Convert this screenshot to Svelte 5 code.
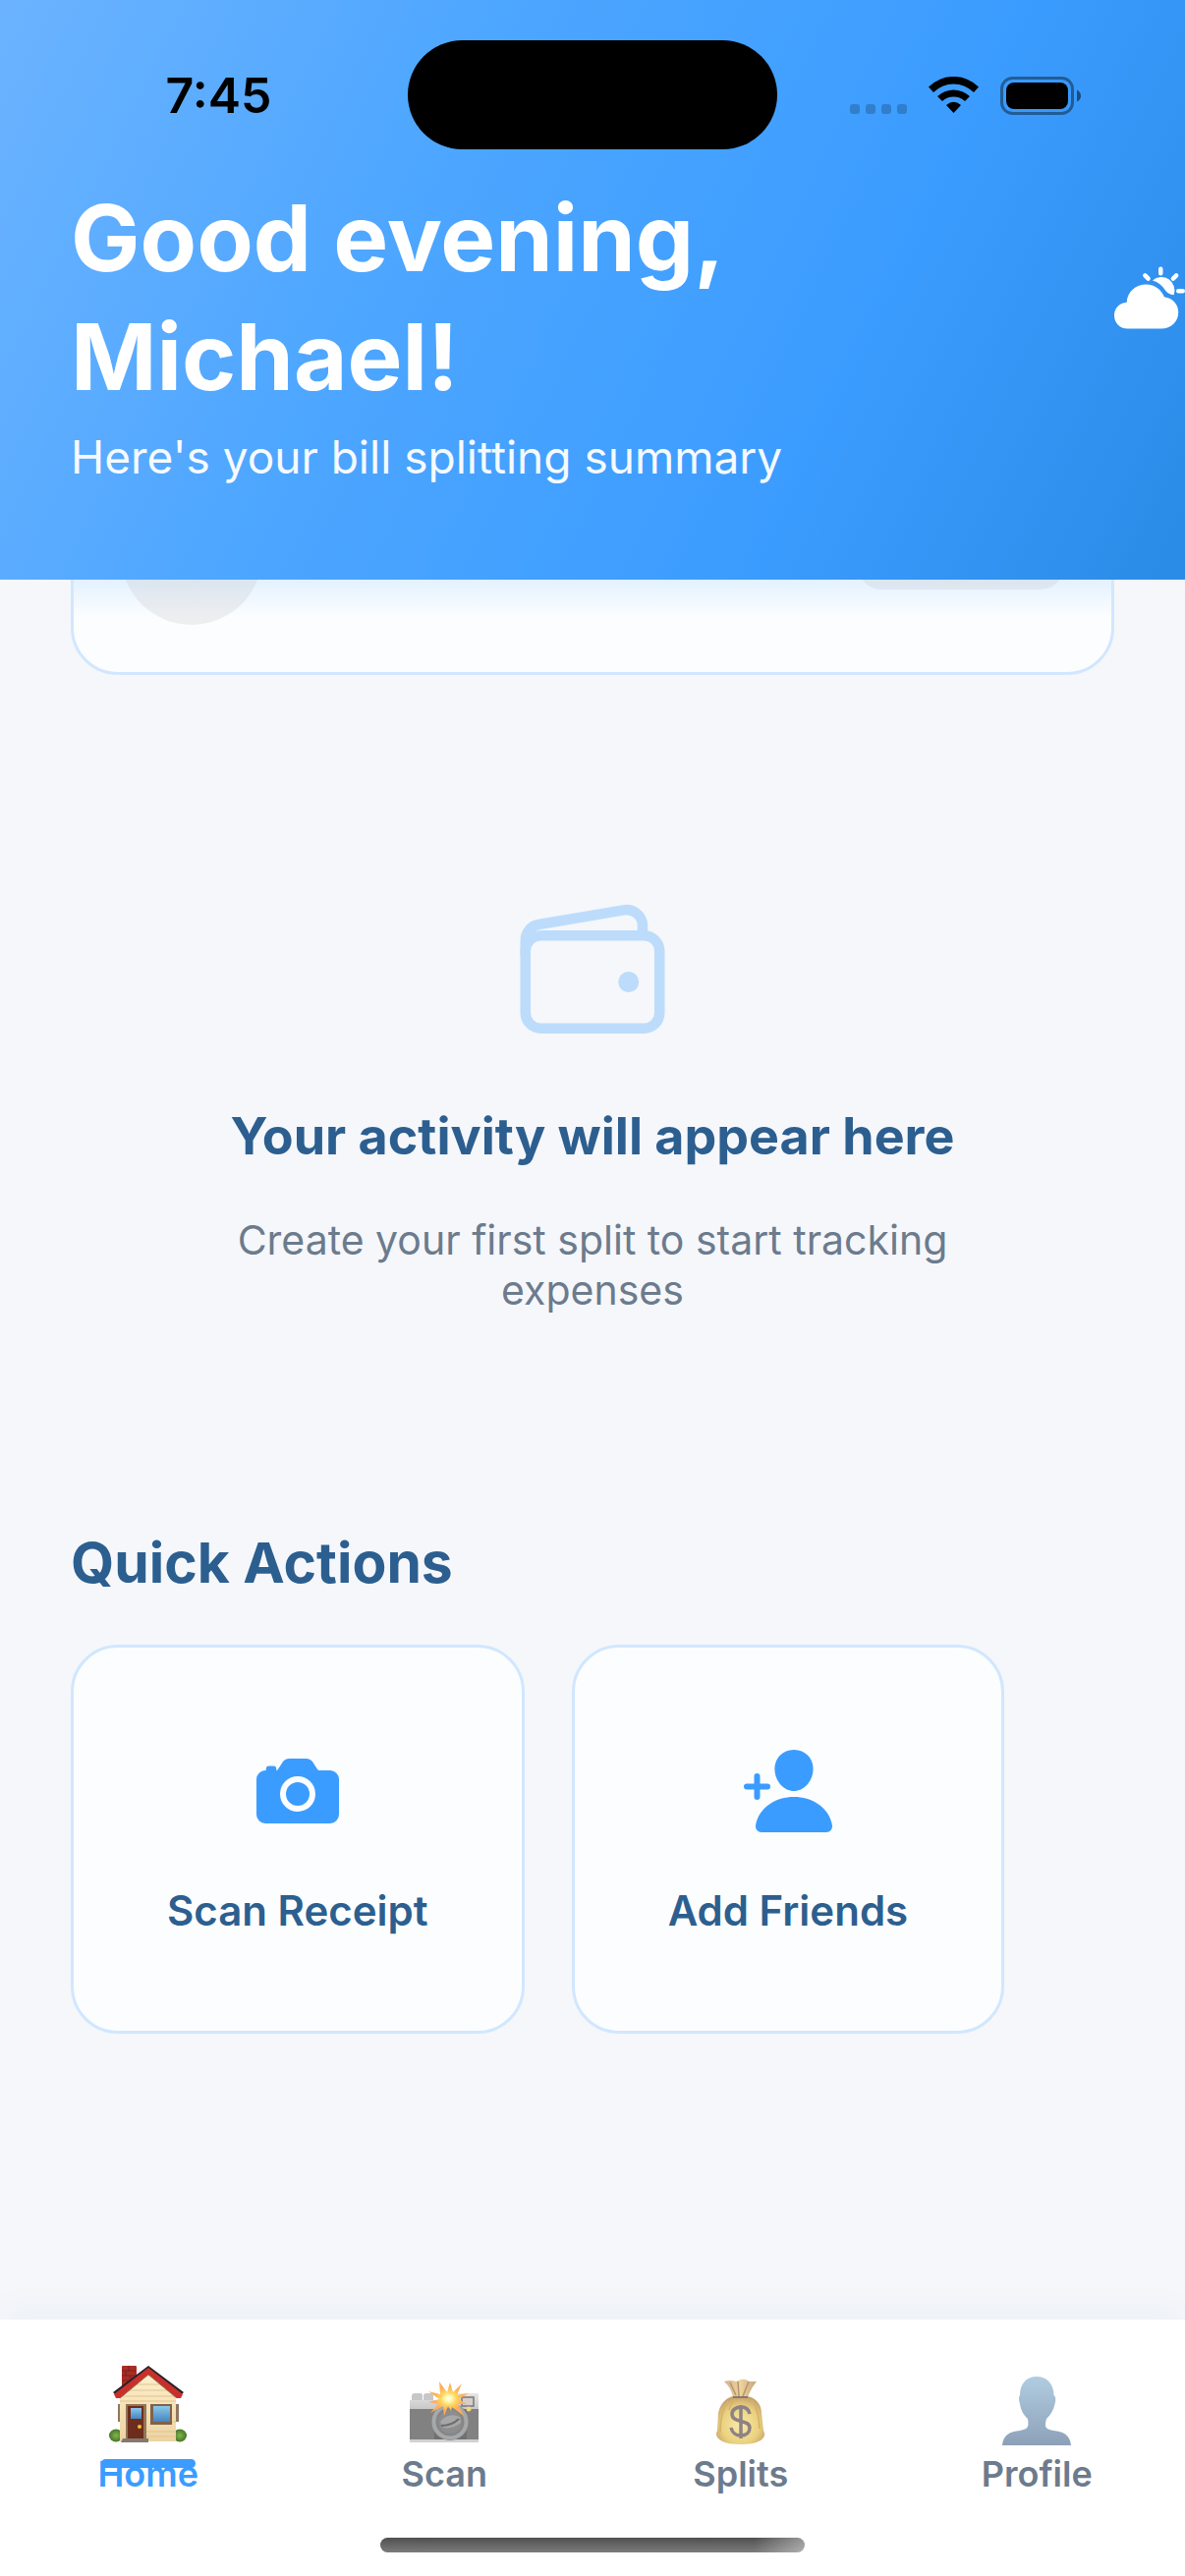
<script>
  let active = $state('home');
  const tabs = [
    { id: 'home', label: 'Home' },
    { id: 'scan', label: 'Scan' },
    { id: 'splits', label: 'Splits' },
    { id: 'profile', label: 'Profile' }
  ];
  const signal = [0, 1, 2, 3];
</script>

<div class="screen">
  <header>
    <div class="status">
      <div class="side"><time>7:45</time></div>
      <div class="island"></div>
      <div class="side indicators">
        <span class="dots">{#each signal as s (s)}<i></i>{/each}</span>
        <svg class="wifi" viewBox="0 0 51 38" aria-hidden="true">
          <path d="M0 10.500A36 36 0 0 1 51 10.500L46 16A29 29 0 0 0 5 16Z" />
          <path d="M9 20A24 24 0 0 1 42 20L37 25A17 17 0 0 0 14 25Z" />
          <path d="M18 29Q25.500 22.500 33 29L25.500 37Z" />
        </svg>
        <svg class="battery" viewBox="0 0 83 40" aria-hidden="true">
          <rect x="1.500" y="2.500" width="72" height="36" rx="11" fill="none" stroke="#000" stroke-opacity=".4" stroke-width="3" />
          <rect x="6" y="7" width="63" height="27" rx="8" />
          <path d="M78 14.500Q82 16.500 82 20.500T78 26.500Z" fill-opacity=".5" />
        </svg>
      </div>
    </div>
    <div class="greeting">
      <h1>Good evening,<br />Michael!</h1>
      <svg class="weather" viewBox="0 0 512 512" aria-hidden="true">
        <path d="M340 480H96C38 480 0 437 0 384C0 333 36 294 90 290C94 210 158 160 232 160C296 160 341 200 362 250C424 258 464 304 464 363C464 430 412 480 340 480Z" />
        <path d="M277 131A96 96 0 0 1 431 236Q390 230 372 206Q338 148 277 131Z" />
        <path class="rays" d="M336 48v32M464 208h32M223 95l23 23M426 118l23-23" />
      </svg>
    </div>
    <p>Here's your bill splitting summary</p>
  </header>

  <main>
    <section class="balance" aria-label="Loading balance">
      <span class="avatar"></span>
      <span class="pill"></span>
    </section>

    <section class="empty">
      <svg viewBox="0 0 512 512" aria-hidden="true">
        <rect x="48" y="144" width="416" height="288" rx="48" ry="48" />
        <path d="M411.360 144v-30A50 50 0 0 0 352 64.900L88.640 109.850A50 50 0 0 0 48 159v49" />
        <circle cx="368" cy="288" r="32" />
      </svg>
      <h2>Your activity will appear here</h2>
      <p>Create your first split to start tracking expenses</p>
    </section>

    <section class="quick">
      <h2>Quick Actions</h2>
      <div class="actions">
        <button type="button">
          <svg viewBox="0 0 512 512" aria-hidden="true">
            <circle cx="256" cy="272" r="64" />
            <path d="M432 144h-59c-3 0-6.720-1.940-9.620-5l-25.940-40.940a15.520 15.520 0 0 0-1.370-1.850C327.110 85.760 315 80 302 80h-92c-13 0-25.110 5.760-34.070 16.210a15.520 15.520 0 0 0-1.370 1.850l-25.940 41c-2.220 2.420-5.340 5-8.620 5v-8a16 16 0 0 0-16-16h-24a16 16 0 0 0-16 16v8h-4a48.050 48.050 0 0 0-48 48V384a48.050 48.050 0 0 0 48 48h352a48.050 48.050 0 0 0 48-48V192a48.050 48.050 0 0 0-48-48zM256 368a96 96 0 1 1 96-96 96.110 96.110 0 0 1-96 96z" />
          </svg>
          <span>Scan Receipt</span>
        </button>
        <button type="button">
          <svg viewBox="0 0 512 512" aria-hidden="true">
            <path d="M288 256c52.790 0 99.430-49.710 104-110.820 2.270-30.700-7.360-59.330-27.120-80.600C345.330 43.570 318 32 288 32c-30.240 0-57.590 11.500-77 32.380-19.630 21.110-29.200 49.800-27 80.780C188.490 206.280 235.120 256 288 256z" />
            <path d="M495.380 439.760c-8.440-46.820-34.790-86.150-76.190-113.750C382.420 301.500 335.830 288 288 288s-94.420 13.500-131.190 38c-41.400 27.600-67.750 66.930-76.190 113.750-1.930 10.730.690 21.340 7.190 29.110A30.940 30.940 0 0 0 112 480h352a30.940 30.940 0 0 0 24.210-11.130c6.480-7.770 9.100-18.380 7.170-29.110zM104 288v-40h40a16 16 0 0 0 0-32h-40v-40a16 16 0 0 0-32 0v40H32a16 16 0 0 0 0 32h40v40a16 16 0 0 0 32 0z" />
          </svg>
          <span>Add Friends</span>
        </button>
      </div>
    </section>
  </main>

  <nav aria-label="Main">
    <div class="tabs">
      {#each tabs as tab (tab.id)}
        <button type="button" class:active={active === tab.id} onclick={() => (active = tab.id)}>
          {#if tab.id === 'home'}
            <svg class="glyph" viewBox="0 0 80 80" aria-hidden="true">
              <defs>
                <linearGradient id="wall" x2="0" y2="1"><stop stop-color="#fff0cd" /><stop offset="1" stop-color="#ecd3a2" /></linearGradient>
                <linearGradient id="pane" x2="0" y2="1"><stop stop-color="#8ac8ea" /><stop offset="1" stop-color="#4585bd" /></linearGradient>
                <radialGradient id="bush"><stop stop-color="#82b647" /><stop offset="1" stop-color="#47752b" /></radialGradient>
              </defs>
              <rect x="13" y="1" width="15" height="25" rx="1" fill="#a92c25" />
              <path d="M13 6h14M13 11h14M13 16h14M20 1v5M17 6v5M22 11v5" stroke="#7d211e" stroke-width="1" />
              <ellipse cx="7" cy="72" rx="7" ry="6.500" fill="url(#bush)" />
              <ellipse cx="72" cy="72" rx="7" ry="6.500" fill="url(#bush)" />
              <path d="M9 40h3v18H9zM68 40h3v18h-3z" fill="#8e7660" />
              <path d="M11 29L40 7l28 22v49H11z" fill="url(#wall)" />
              <path d="M28 20h25M18 26h44M11 32h57M11 37h57M64 58h4M38 68h30M38 73h30" stroke="#dfc590" stroke-width="1" />
              <path d="M4 28L40 1l36 27-3 3L40 6 7 31z" fill="#242328" />
              <path d="M5 30L40 3l35 27-2 4h-4L40 10 11 34H7z" fill="#c9302c" />
              <path d="M11 34L40 10l29 24" fill="none" stroke="#8b6a46" stroke-width="1" />
              <path d="M17 40h21v36H17z" fill="#947457" />
              <path d="M19 42h16v33H19z" fill="#6d2d1d" />
              <path d="M22 44h11v11H22z" fill="url(#pane)" />
              <circle cx="31" cy="63" r="2" fill="#f5bd35" />
              <path d="M42 40h22v21H42z" fill="#806249" />
              <path d="M45 42h17v16H45z" fill="url(#pane)" />
              <path d="M14 75h26v4H12z" fill="#85796e" />
            </svg>
          {:else if tab.id === 'scan'}
            <svg class="glyph" viewBox="0 0 72 72" aria-hidden="true">
              <defs>
                <linearGradient id="top" x2="0" y2="1"><stop stop-color="#e6e6e6" /><stop offset="1" stop-color="#c8c8c9" /></linearGradient>
                <radialGradient id="flash"><stop stop-color="#fff" /><stop offset=".2" stop-color="#fff5a5" /><stop offset=".4" stop-color="#ffd45e" /><stop offset=".7" stop-color="#ffae5c" /></radialGradient>
              </defs>
              <path d="M3 21q0-3 3-3h6q2 0 2 3v5H3zM15 21q0-3 3-3h5q2 0 2 3v5H15z" fill="#c6c7c8" />
              <path d="M1 25h45v-7h25v16H1z" fill="url(#top)" />
              <path d="M1 34h70v32H1z" fill="#818181" />
              <path d="M26 34h33v32H26z" fill="#707070" />
              <path d="M1 65h70v3H1z" fill="#d1d1d1" />
              <rect x="54" y="22" width="12" height="9" fill="#d6cec9" stroke="#77787a" stroke-width="1.500" />
              <circle cx="61" cy="34" r="2.500" fill="#f5d47a" />
              <circle cx="42" cy="47" r="19" fill="#858687" />
              <circle cx="42" cy="47" r="16.500" fill="none" stroke="#a6a8aa" stroke-width="4" />
              <circle cx="42" cy="47" r="12" fill="#8d8d8d" />
              <path d="M32 47q8-10 20-5l1 6q-9 7-18 5z" fill="#a7a7a7" />
              <path d="M33 51q11 0 18-7" fill="none" stroke="#6d6d6d" stroke-width="2" />
              <path d="M31 6L39 17L42 7L45 17L54 8L49 20L61 18L51 24L59 29L50 29L56 41L44 32L43 36L40 31L36 41L35 31L22 38L30 29L20 27L31 24L20 16L32 19Z" fill="url(#flash)" />
            </svg>
          {:else if tab.id === 'splits'}
            <svg class="glyph" viewBox="0 0 72 72" aria-hidden="true">
              <defs>
                <radialGradient id="bag" cy=".6" r=".6"><stop stop-color="#fae9a9" /><stop offset=".65" stop-color="#ead17e" /><stop offset="1" stop-color="#c4a06c" /></radialGradient>
                <linearGradient id="neck"><stop stop-color="#d3b18e" /><stop offset=".5" stop-color="#ecd49b" /><stop offset="1" stop-color="#c9a47f" /></linearGradient>
              </defs>
              <path d="M19 6q7-2 12 0l5-2q5-1 8 2h8q-6 7-9 16H28Q26 12 19 6z" fill="url(#neck)" />
              <path d="M25 7l6 13M33 6l1 15M44 6l-6 15" stroke="#b8946f" stroke-width="1.500" fill="none" />
              <path d="M28 21h15c8 2 14 8 14 17l2 18c4 7-3 14-23 14s-28-7-24-14l1-18c2-9 7-15 15-17z" fill="url(#bag)" />
              <path d="M23 26q-8 11-8 32M31 23q-5 5-7 12M47 25q7 9 8 29" stroke="#d3b369" stroke-width="1.500" fill="none" />
              <path d="M28 22h15" stroke="#8b776f" stroke-width="2" />
              <path d="M45 39c-1-5-5-7-9-7-5 0-9 3-9 7 0 10 18 5 18 14 0 5-4 8-9 8s-9-3-10-8M36 30v34" stroke="#8d8284" stroke-width="3.500" fill="none" />
            </svg>
          {:else}
            <svg class="glyph" viewBox="0 0 72 72" aria-hidden="true">
              <defs><linearGradient id="bust" x2="0" y2="1"><stop stop-color="#b1cce1" /><stop offset="1" stop-color="#8ca1b8" /></linearGradient></defs>
              <path d="M36 1C46 1 53.500 8 53.500 20q3 2 1 9C53 35 51 39 46 44c-2 8-2 10 7 12 10 1 17 4 18 15H1c1-11 8-14 18-15 9-2 9-4 8-12-5-5-7-9-8-15q-2-7 0-9C19 8 26 1 36 1z" fill="url(#bust)" />
            </svg>
          {/if}
          <span class="label">{tab.label}</span>
        </button>
      {/each}
    </div>
    <div class="grabber"></div>
  </nav>
</div>

<style>
  :global(body) {
    margin: 0;
    background: #f5f7fb;
  }
  .screen {
    display: flex;
    flex-direction: column;
    min-height: 100vh;
    overflow: hidden;
    font-family: Inter, 'Liberation Sans', sans-serif;
    background: #f5f7fb;
  }
  h1, h2, p {
    margin: 0;
  }
  button {
    font: inherit;
    cursor: pointer;
  }
  svg {
    display: block;
    flex: none;
  }

  header {
    position: relative;
    z-index: 1;
    padding-bottom: 96px;
    color: #fff;
    background: linear-gradient(116deg, #6bb3ff 0%, #4da6ff 35%, #3b9cff 70%, #2a8be6 100%);
  }
  .status {
    display: grid;
    grid-template-columns: 1fr 376px 1fr;
    align-items: center;
    padding-top: 41px;
    color: #000;
  }
  .side {
    display: flex;
    justify-content: center;
    align-items: center;
    font-size: 50px;
    font-weight: 600;
    line-height: 60px;
  }
  .side time {
    padding-left: 30px;
  }
  .island {
    height: 111px;
    border-radius: 56px;
    background: #000;
  }
  .indicators {
    justify-content: flex-end;
    padding-right: 105px;
    gap: 22px;
  }
  .dots {
    display: flex;
    gap: 6px;
    padding-top: 28px;
  }
  .dots i {
    width: 10px;
    height: 10px;
    border-radius: 3px;
    background: rgba(0, 0, 0, 0.2);
  }
  .wifi {
    width: 51px;
    height: 38px;
  }
  .battery {
    width: 83px;
    height: 40px;
  }
  .greeting {
    display: flex;
    align-items: center;
    justify-content: space-between;
    padding: 30px 0 0 72px;
  }
  h1 {
    font-size: 94px;
    font-weight: 700;
    line-height: 121px;
  }
  header p {
    margin-top: 12px;
    padding: 0 72px;
    font-size: 46px;
    line-height: 58px;
    opacity: 0.95;
  }
  .weather {
    width: 72px;
    height: 72px;
    fill: #fff;
  }
  .rays {
    stroke: #fff;
    stroke-width: 32;
    stroke-linecap: round;
  }

  main {
    display: flex;
    flex: 1;
    flex-direction: column;
    padding: 0 72px;
  }
  .balance {
    display: flex;
    align-items: center;
    justify-content: space-between;
    margin-top: -149px;
    padding: 48px;
    border: 3px solid #d1e7fe;
    border-radius: 48px;
    background: linear-gradient(rgba(252, 253, 255, 0) 140px, #fcfdff 184px), #dff0ff;
  }
  .avatar,
  .pill {
    background: rgba(190, 190, 190, 0.23);
  }
  .avatar {
    width: 144px;
    height: 144px;
    border-radius: 50%;
  }
  .pill {
    width: 210px;
    height: 72px;
    border-radius: 24px;
  }
  .empty {
    display: flex;
    flex-direction: column;
    align-items: center;
    padding: 218px 120px 0;
    text-align: center;
  }
  .empty svg {
    width: 168px;
    height: 168px;
    fill: none;
    stroke: #bddcfb;
    stroke-width: 32;
    stroke-linejoin: round;
  }
  .empty circle {
    fill: #bddcfb;
    stroke: none;
  }
  h2 {
    color: #2c5f8f;
    font-weight: 700;
  }
  .empty h2 {
    margin-top: 52px;
    font-size: 52px;
    line-height: 64px;
    white-space: nowrap;
  }
  .empty p {
    margin-top: 48px;
    color: #6c7b8d;
    font-size: 41px;
    line-height: 51px;
  }
  .quick {
    padding-top: 216px;
  }
  .quick h2 {
    font-size: 57px;
    line-height: 71px;
  }
  .actions {
    display: flex;
    gap: 48px;
    margin-top: 48px;
  }
  .actions button {
    display: flex;
    flex-direction: column;
    align-items: center;
    justify-content: center;
    gap: 48px;
    min-height: 396px;
    padding: 48px 95px;
    border: 3px solid #d1e7fe;
    border-radius: 48px;
    background: #fcfdff;
    color: #2c5f8f;
    font-size: 42px;
    font-weight: 600;
    line-height: 51px;
    white-space: nowrap;
  }
  .actions svg {
    width: 96px;
    height: 96px;
    fill: #3b9cff;
  }

  nav {
    padding: 36px 0 24px;
    background: #fff;
    box-shadow: 0 -6px 36px rgba(44, 80, 110, 0.05);
  }
  .tabs {
    display: grid;
    grid-template-columns: repeat(4, 1fr);
  }
  .tabs button {
    position: relative;
    display: flex;
    flex-direction: column;
    align-items: center;
    justify-content: flex-end;
    gap: 6px;
    height: 143px;
    padding: 0;
    border: 0;
    background: none;
    color: #6c7b8d;
    font-size: 36px;
    font-weight: 600;
    line-height: 44px;
  }
  .glyph {
    width: 72px;
    height: 72px;
  }
  .active .glyph {
    width: 80px;
    height: 80px;
    margin-bottom: 3px;
  }
  .tabs .active {
    color: #3b9cff;
  }
  .tabs .active::after {
    content: '';
    position: absolute;
    top: 106px;
    left: 50%;
    width: 96px;
    height: 9px;
    margin-left: -48px;
    border-radius: 5px;
    background: #3b9cff;
  }
  .grabber {
    width: 432px;
    height: 15px;
    margin: 43px auto 0;
    border-radius: 8px;
    background: linear-gradient(90deg, transparent 88%, rgba(255, 255, 255, 0.4)), linear-gradient(#505050, #7b7b7b);
  }
</style>
